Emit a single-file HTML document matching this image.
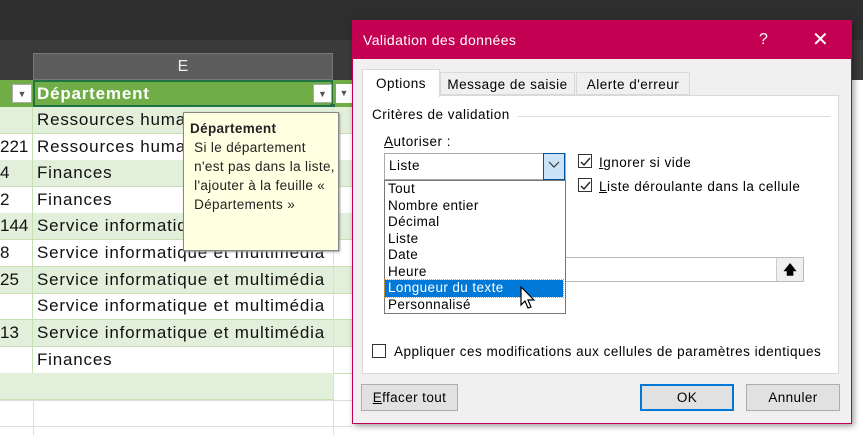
<!DOCTYPE html>
<html><head><meta charset="utf-8"><style>
*{margin:0;padding:0;box-sizing:border-box}
body{width:863px;height:435px;overflow:hidden;background:#fff;position:relative;font-family:"Liberation Sans",sans-serif}
.a{position:absolute}
.row{position:absolute;left:0;width:352px;height:27px;border-bottom:1px solid #c6e0b4;font-size:17px;letter-spacing:0.8px;line-height:26px;color:#111}
.g{background:#e2efda}
.row .n{position:absolute;left:0;width:33px;border-right:1px solid #c6e0b4;height:26px;overflow:hidden;text-align:left;letter-spacing:0}
.row .t{position:absolute;left:37px;white-space:nowrap}
.d{font-size:13px;color:#000;letter-spacing:.5px;white-space:nowrap}
.li{position:absolute;left:1px;width:178px;height:16.5px;line-height:16px;padding-left:3px;font-size:13.5px;letter-spacing:.4px}
.btn{position:absolute;height:27px;background:#e1e1e1;border:1px solid #adadad;font-size:13.5px;text-align:center;line-height:25px;letter-spacing:.4px}
.cb{position:absolute;width:14px;height:14px;border:1px solid #333;background:#fff}
</style></head><body>
<div class="a" style="left:0;top:0;width:863px;height:40px;background:#2e2e2e"></div>
<div class="a" style="left:0;top:40px;width:863px;height:40px;background:#3a3a3a"></div>
<div class="a" style="left:33px;top:53px;width:300px;height:27px;background:#5d5d5d;border:1px solid #777;color:#eee;font-size:16px;text-align:center;line-height:26px">E</div>
<div class="a" style="left:333px;top:80px;width:30px;height:355px;background:#fff;border-left:1px solid #d4d4d4"></div>
<div class="a" style="left:0;top:80px;width:352px;height:27px;background:#70ad47"></div>
<div class="a" style="left:33px;top:80px;width:300px;height:27px;border:2px solid #217346"></div>
<div class="a" style="left:37px;top:80px;color:#fff;font-weight:bold;font-size:17px;letter-spacing:.8px;line-height:27px">Département</div>
<div class="a" style="left:12px;top:84px;width:20px;height:19px;background:#fff;border:1px solid #aaa;font-size:9px;text-align:center;line-height:18px;color:#555">▼</div>
<div class="a" style="left:313px;top:84px;width:19px;height:19px;background:#fff;border:1px solid #aaa;font-size:9px;text-align:center;line-height:18px;color:#555">▼</div>
<div class="a" style="left:336px;top:84px;width:16px;height:19px;background:#fff;font-size:9px;text-align:center;line-height:18px;color:#555">▼</div>
<div class="a" style="left:330px;top:104px;width:5px;height:5px;background:#217346"></div>
<div class="row g" style="top:107px"><span class="n"></span><span class="t">Ressources humaines</span></div>
<div class="row" style="top:134px"><span class="n">221</span><span class="t">Ressources humaines</span></div>
<div class="row g" style="top:160px"><span class="n">4</span><span class="t">Finances</span></div>
<div class="row" style="top:187px"><span class="n">2</span><span class="t">Finances</span></div>
<div class="row g" style="top:213px"><span class="n">144</span><span class="t">Service informatique et multimédia</span></div>
<div class="row" style="top:240px"><span class="n">8</span><span class="t">Service informatique et multimédia</span></div>
<div class="row g" style="top:267px"><span class="n">25</span><span class="t">Service informatique et multimédia</span></div>
<div class="row" style="top:293px"><span class="n"></span><span class="t">Service informatique et multimédia</span></div>
<div class="row g" style="top:320px"><span class="n">13</span><span class="t">Service informatique et multimédia</span></div>
<div class="row" style="top:347px"><span class="n"></span><span class="t">Finances</span></div>
<div class="row g" style="top:373px;width:333px"></div>
<div class="a" style="left:0;top:400px;width:352px;height:1px;background:#ddd"></div>
<div class="a" style="left:0;top:426px;width:352px;height:1px;background:#ddd"></div>
<div class="a" style="left:33px;top:400px;width:1px;height:35px;background:#ddd"></div>
<div class="a" style="left:333px;top:107px;width:1px;height:328px;background:#ddd"></div>
<div class="a" style="left:183px;top:112px;width:156px;height:139px;background:#ffffe1;border:1px solid #888;box-shadow:1px 1px 2px #999;font-size:13.5px;letter-spacing:.35px;line-height:19px;padding:6px 0 0 6px;color:#222;white-space:nowrap">
<b>Département</b><br>&nbsp;Si le département<br>&nbsp;n'est pas dans la liste,<br>&nbsp;l'ajouter à la feuille «<br>&nbsp;Départements »</div>
<div class="a" style="left:352px;top:20px;width:500px;height:404px;background:#f0f0f0;border:1px solid #c30052;box-shadow:2px 2px 6px rgba(0,0,0,.4)"></div>
<div class="a" style="left:352px;top:20px;width:500px;height:39px;background:#c30052;color:#fff;font-size:14px;letter-spacing:.4px;line-height:40px;padding-left:11px">Validation des données</div>
<div class="a" style="left:759px;top:20px;color:#fff;font-size:16px;line-height:40px">?</div>
<div class="a" style="left:812px;top:20px;color:#fff;font-size:20px;line-height:40px">✕</div>
<div class="a d" style="left:362px;top:95px;width:477px;height:279px;background:#fff;border:1px solid #d9d9d9"></div>
<div class="a d" style="left:362px;top:69px;width:78px;height:28px;background:#fff;border:1px solid #d9d9d9;border-bottom:none;text-align:center;line-height:28px;font-size:13.5px">Options</div>
<div class="a d" style="left:440px;top:72px;width:135px;height:23px;background:#f0f0f0;border:1px solid #d9d9d9;text-align:center;line-height:23px;font-size:13.5px">Message de saisie</div>
<div class="a d" style="left:576px;top:72px;width:114px;height:23px;background:#f0f0f0;border:1px solid #d9d9d9;text-align:center;line-height:23px;font-size:13.5px">Alerte d'erreur</div>
<div class="a d" style="left:372px;top:107px;font-size:13.5px">Critères de validation</div>
<div class="a" style="left:518px;top:116px;width:312px;height:1px;background:#ddd"></div>
<div class="a d" style="left:384px;top:134px;font-size:13.5px"><u>A</u>utoriser :</div>
<div class="a" style="left:384px;top:153px;width:182px;height:27px;background:#fff;border:1px solid #aaa"></div>
<div class="a d" style="left:389px;top:158px;font-size:13.5px">Liste</div>
<div class="a" style="left:543px;top:153px;width:22px;height:27px;background:#cce4f7;border:1px solid #005499;text-align:center;color:#333;font-size:11px;line-height:25px">
<svg width="12" height="8" viewBox="0 0 12 8"><path d="M1 1l5 5 5-5" fill="none" stroke="#333" stroke-width="1.2"/></svg></div>
<div class="a" style="left:384px;top:180px;width:182px;height:134px;background:#fff;border:1px solid #777"></div>
<div class="li" style="left:385px;top:181px">Tout</div>
<div class="li" style="left:385px;top:197.5px">Nombre entier</div>
<div class="li" style="left:385px;top:214px">Décimal</div>
<div class="li" style="left:385px;top:230.5px">Liste</div>
<div class="li" style="left:385px;top:247px">Date</div>
<div class="li" style="left:385px;top:263.5px">Heure</div>
<div class="li" style="left:385px;top:280px;background:#0078d7;color:#fff;outline:1px dotted #f90">Longueur du texte</div>
<div class="li" style="left:385px;top:296.5px">Personnalisé</div>
<svg class="a" style="left:520px;top:286px" width="20" height="26" viewBox="0 0 20 26"><path d="M1 1v18l4-4 3 7 3-1-3-7h6z" fill="#fff" stroke="#000" stroke-width="1.2"/></svg>
<div class="cb" style="left:578px;top:154px"><svg width="12" height="12"><path d="M2 6l3 3 6-7" fill="none" stroke="#222" stroke-width="1.4"/></svg></div>
<div class="a d" style="left:599px;top:155px;font-size:13.5px"><u>I</u>gnorer si vide</div>
<div class="cb" style="left:578px;top:178px"><svg width="12" height="12"><path d="M2 6l3 3 6-7" fill="none" stroke="#222" stroke-width="1.4"/></svg></div>
<div class="a d" style="left:599px;top:179px;font-size:13.5px"><u>L</u>iste déroulante dans la cellule</div>
<div class="a" style="left:566px;top:257px;width:238px;height:25px;background:#fff;border:1px solid #bbb;border-left:none"></div>
<div class="a" style="left:776px;top:258px;width:27px;height:23px;background:#f0f0f0;border-left:1px solid #ccc;text-align:center;font-size:13px;line-height:23px;font-weight:bold">🡅</div>
<div class="cb" style="left:372px;top:344px"></div>
<div class="a d" style="left:394px;top:344px;font-size:13.5px">Appliquer ces modifications aux cellules de paramètres identiques</div>
<div class="btn" style="left:361px;top:384px;width:97px"><u>E</u>ffacer tout</div>
<div class="btn" style="left:640px;top:384px;width:94px;border:2px solid #0078d7;line-height:23px">OK</div>
<div class="btn" style="left:746px;top:384px;width:94px">Annuler</div>
</body></html>
